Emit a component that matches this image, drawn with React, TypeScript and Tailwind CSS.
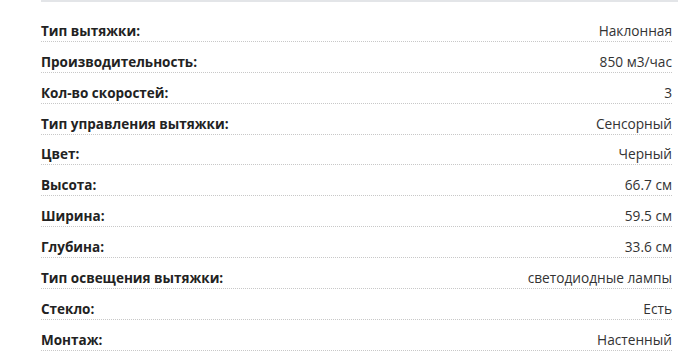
const specs: [string, string][] = [
  ["Тип вытяжки:", "Наклонная"],
  ["Производительность:", "850 м3/час"],
  ["Кол-во скоростей:", "3"],
  ["Тип управления вытяжки:", "Сенсорный"],
  ["Цвет:", "Черный"],
  ["Высота:", "66.7 см"],
  ["Ширина:", "59.5 см"],
  ["Глубина:", "33.6 см"],
  ["Тип освещения вытяжки:", "светодиодные лампы"],
  ["Стекло:", "Есть"],
  ["Монтаж:", "Настенный"],
];

export default function App() {
  return (
    <div className="w-[678px] h-[354px] bg-white overflow-hidden pl-[41px] font-['Open_Sans',sans-serif]">
      <div className="h-[2px] bg-[#e3e5e8]" />
      <div className="pr-[6px] pt-[9px]">
        {specs.map(([label, value]) => (
          <div
            key={label}
            className="h-[30.9px] flex items-end justify-between border-b border-dotted border-[#c8c8c8] leading-[20px]"
          >
            <span className="font-bold text-[13.5px] text-[#222]">{label}</span>
            <span className="text-[13.7px] text-[#333]">{value}</span>
          </div>
        ))}
      </div>
    </div>
  );
}
